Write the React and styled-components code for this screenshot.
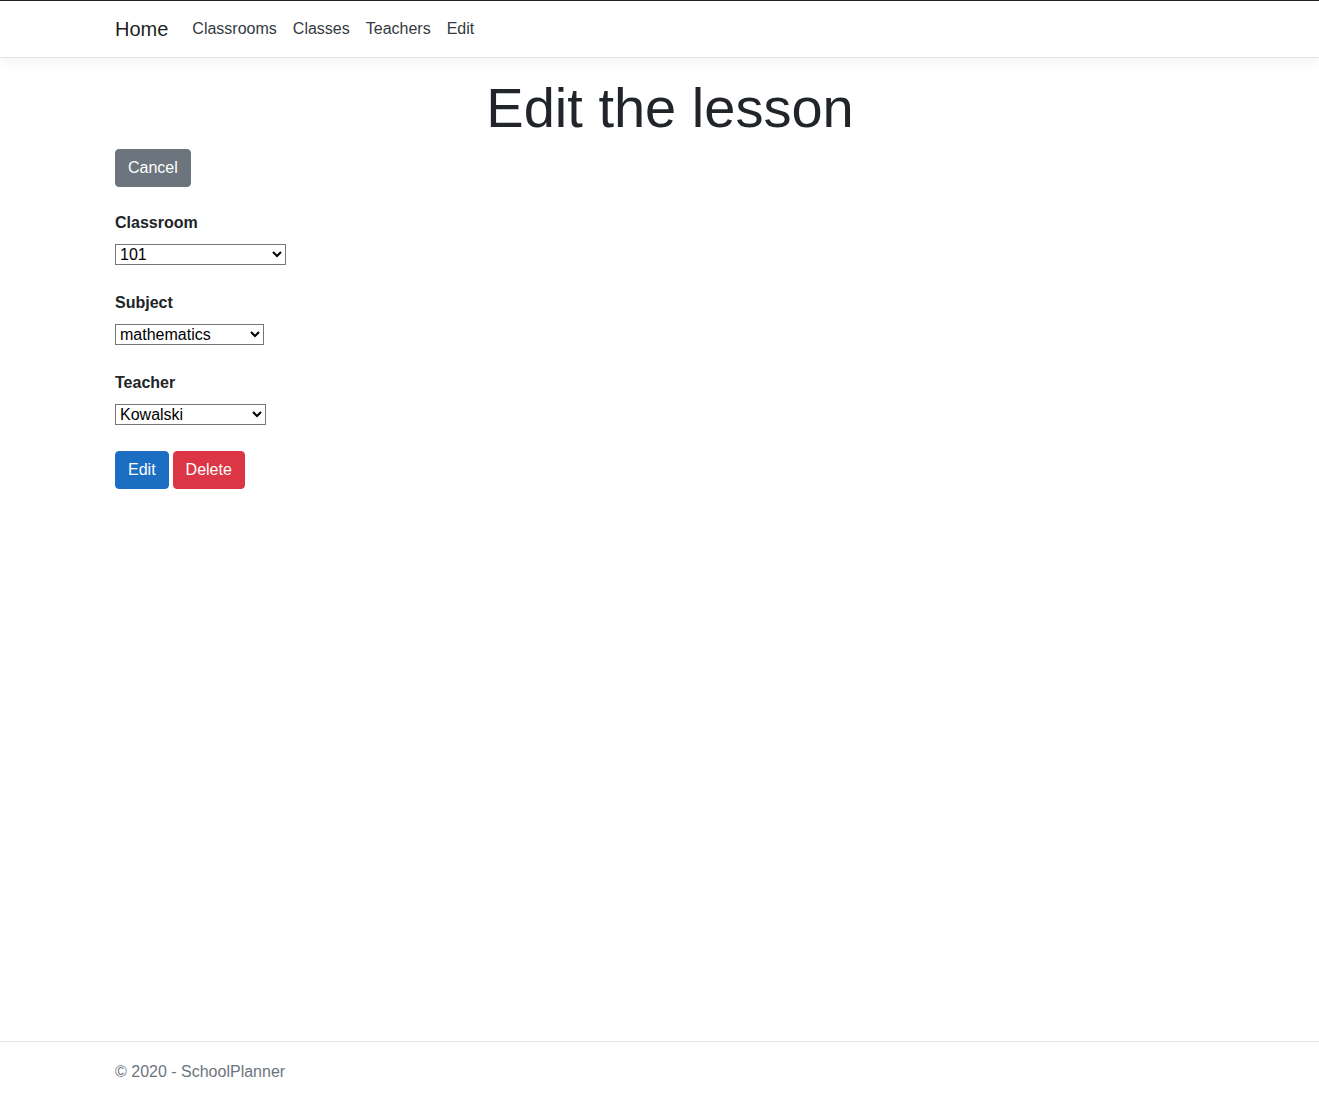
import React from "react";
import styled, { createGlobalStyle } from "styled-components";

const GlobalStyle = createGlobalStyle`
  html, body {
    margin: 0;
    padding: 0;
    height: 100%;
  }
  body {
    font-family: "Liberation Sans", Arial, sans-serif;
    font-size: 16px;
    line-height: 1.5;
    color: #212529;
    background: #fff;
  }
  * {
    box-sizing: border-box;
  }
`;

const Page = styled.div`
  min-height: 100vh;
  display: flex;
  flex-direction: column;
  border-top: 1px solid #212121;
`;

const Navbar = styled.header`
  background: #fff;
  border-bottom: 1px solid #e5e5e5;
  box-shadow: 0 4px 12px rgba(0, 0, 0, 0.05);
  padding: 8px 0;
  margin-bottom: 16px;
`;

const Container = styled.div`
  width: 1110px;
  margin-left: 115px;
`;

const NavInner = styled(Container)`
  display: flex;
  align-items: center;
  height: 40px;
`;

const Brand = styled.a`
  font-size: 20px;
  line-height: 30px;
  color: rgba(0, 0, 0, 0.9);
  text-decoration: none;
  margin-right: 16px;
`;

const NavLink = styled.a`
  font-size: 16px;
  line-height: 24px;
  color: #343a40;
  text-decoration: none;
  padding: 8px;
`;

const Main = styled(Container)`
  flex: 1;
`;

const Title = styled.h1`
  font-size: 56px;
  font-weight: 300;
  line-height: 1.2;
  text-align: center;
  margin: 0 0 8px;
`;

const Button = styled.a`
  display: inline-block;
  font-size: 16px;
  line-height: 24px;
  padding: 6px 12px;
  border: 1px solid ${(p) => p.$bg};
  border-radius: 4px;
  background: ${(p) => p.$bg};
  color: #fff;
  text-decoration: none;
  cursor: pointer;
`;

const Form = styled.form`
  margin-top: 24px;
`;

const Group = styled.div`
  margin-bottom: 26px;
`;

const Label = styled.label`
  display: block;
  font-weight: 700;
  line-height: 24px;
  margin-bottom: 9px;
`;

const Select = styled.select`
  display: block;
  width: ${(p) => p.$w}px;
  height: 21px;
  font-family: "Liberation Sans", Arial, sans-serif;
  font-size: 16px;
  color: #000;
  background: #fff;
  border: 1px solid #767676;
  border-radius: 0;
  padding: 0;
  margin: 0;
`;

const Actions = styled.div`
  display: flex;
  gap: 4px;
`;

const Footer = styled.footer`
  border-top: 1px solid #e5e5e5;
  padding-top: 1px;
  line-height: 57px;
  color: #6c757d;
  white-space: nowrap;
`;

export default function App() {
  return (
    <Page>
      <GlobalStyle />
      <Navbar>
        <NavInner>
          <Brand href="#">Home</Brand>
          <NavLink href="#">Classrooms</NavLink>
          <NavLink href="#">Classes</NavLink>
          <NavLink href="#">Teachers</NavLink>
          <NavLink href="#">Edit</NavLink>
        </NavInner>
      </Navbar>
      <Main>
        <Title>Edit the lesson</Title>
        <Button $bg="#6c757d">Cancel</Button>
        <Form onSubmit={(e) => e.preventDefault()}>
          <Group>
            <Label>Classroom</Label>
            <Select $w={171} defaultValue="101">
              <option>101</option>
              <option>102</option>
            </Select>
          </Group>
          <Group>
            <Label>Subject</Label>
            <Select $w={149} defaultValue="mathematics">
              <option>mathematics</option>
            </Select>
          </Group>
          <Group>
            <Label>Teacher</Label>
            <Select $w={151} defaultValue="Kowalski">
              <option>Kowalski</option>
            </Select>
          </Group>
          <Actions>
            <Button $bg="#1b6ec2">Edit</Button>
            <Button $bg="#dc3545">Delete</Button>
          </Actions>
        </Form>
      </Main>
      <Footer>
        <Container>© 2020 - SchoolPlanner</Container>
      </Footer>
    </Page>
  );
}
